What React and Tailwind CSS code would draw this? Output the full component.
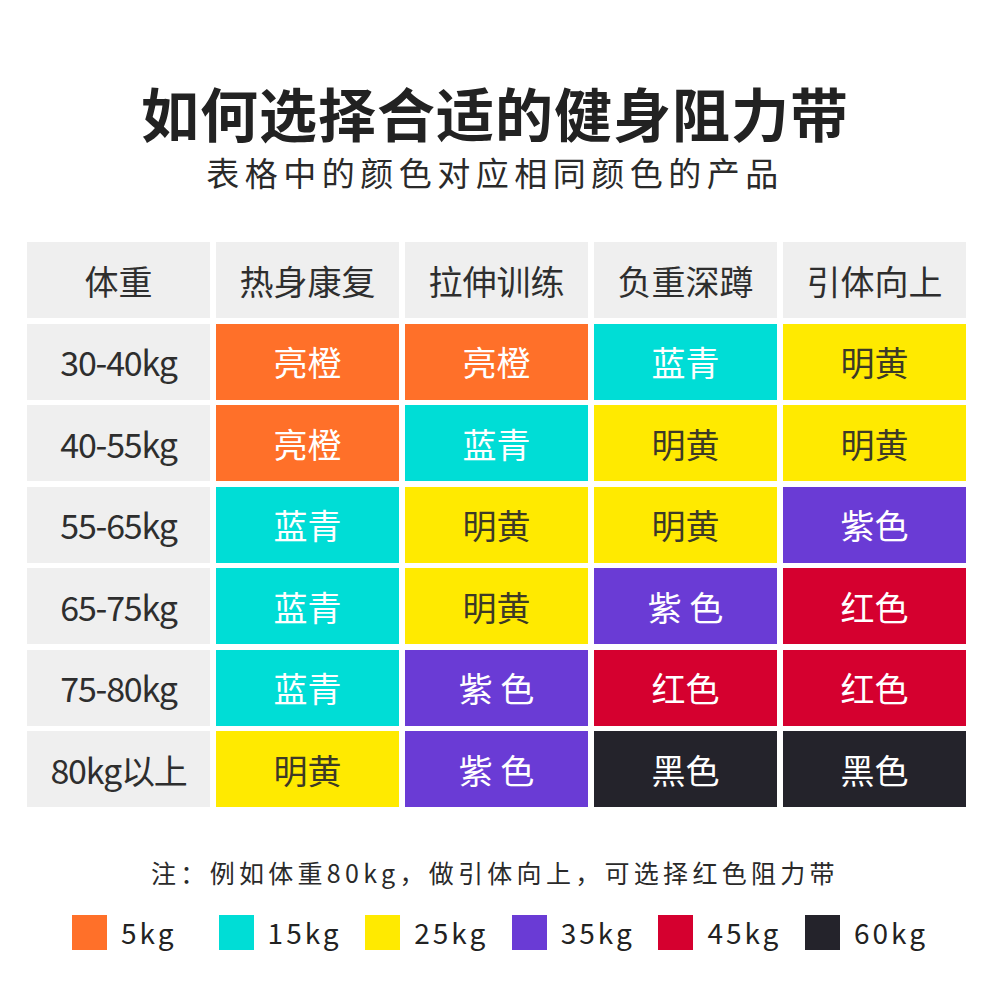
import React from "react";

const FONT = { fontFamily: '"Noto Sans CJK SC", "Noto Sans", sans-serif' };

const COLORS = {
  orange: { bg: "bg-[#ff7029]", text: "text-white", name: "亮橙" },
  cyan: { bg: "bg-[#00ddd6]", text: "text-white", name: "蓝青" },
  yellow: { bg: "bg-[#ffea00]", text: "text-[#3d3a26]", name: "明黄" },
  purple: { bg: "bg-[#6a3bd5]", text: "text-white", name: "紫 色" },
  purple2: { bg: "bg-[#6a3bd5]", text: "text-white", name: "紫色" },
  red: { bg: "bg-[#d5002f]", text: "text-white", name: "红色" },
  black: { bg: "bg-[#24232b]", text: "text-white", name: "黑色" },
};

const headers = ["体重", "热身康复", "拉伸训练", "负重深蹲", "引体向上"];

const rows = [
  ["30-40kg", "orange", "orange", "cyan", "yellow"],
  ["40-55kg", "orange", "cyan", "yellow", "yellow"],
  ["55-65kg", "cyan", "yellow", "yellow", "purple2"],
  ["65-75kg", "cyan", "yellow", "purple", "red"],
  ["75-80kg", "cyan", "purple", "red", "red"],
  ["80kg以上", "yellow", "purple", "black", "black"],
];

const legend = [
  { bg: "bg-[#ff7029]", label: "5kg" },
  { bg: "bg-[#00ddd6]", label: "15kg" },
  { bg: "bg-[#ffea00]", label: "25kg" },
  { bg: "bg-[#6a3bd5]", label: "35kg" },
  { bg: "bg-[#d5002f]", label: "45kg" },
  { bg: "bg-[#24232b]", label: "60kg" },
];

const GrayCell = ({ children, tight }) => (
  <div
    className={`flex items-center justify-center bg-[#efefef] text-[34px] text-[#2e2e2e] ${
      tight ? "tracking-[-1.2px]" : ""
    }`}
  >
    {children}
  </div>
);

const App = () => {
  return (
    <div className="w-[990px] h-[1003px] bg-white flex flex-col items-center" style={FONT}>
      {/* === TITLE === */}
      <h1 className="mt-[83px] text-[58px] leading-[58px] font-bold tracking-[1px] text-[#222]">
        如何选择合适的健身阻力带
      </h1>
      <p className="mt-[13px] text-[33px] leading-[36px] tracking-[5.5px] text-[#2a2a2a]">
        表格中的颜色对应相同颜色的产品
      </p>

      {/* === TABLE === */}
      <div className="mt-[52px] self-start ml-[27px] grid grid-cols-[repeat(5,183px)] auto-rows-[76px] gap-x-[6px] gap-y-[5.5px]">
        {headers.map((h) => (
          <GrayCell key={h}>{h}</GrayCell>
        ))}
        {rows.map((row) => (
          <React.Fragment key={row[0]}>
            <GrayCell tight>{row[0]}</GrayCell>
            {row.slice(1).map((c, i) => (
              <div
                key={i}
                className={`flex items-center justify-center text-[34px] ${COLORS[c].bg} ${COLORS[c].text}`}
              >
                {COLORS[c].name}
              </div>
            ))}
          </React.Fragment>
        ))}
      </div>

      {/* === NOTE === */}
      <p className="mt-[48px] text-[25px] leading-[34px] tracking-[4.3px] text-[#2a2a2a]">
        注：例如体重80kg，做引体向上，可选择红色阻力带
      </p>

      {/* === LEGEND === */}
      <div className="mt-[26px] self-start ml-[72px] flex">
        {legend.map((l) => (
          <div key={l.label} className="w-[146.6px] flex items-center">
            <div className={`w-[35px] h-[35px] ${l.bg}`} />
            <span className="ml-[14px] text-[28px] leading-[35px] tracking-[3px] text-[#222]">
              {l.label}
            </span>
          </div>
        ))}
      </div>
    </div>
  );
};

export default App;
